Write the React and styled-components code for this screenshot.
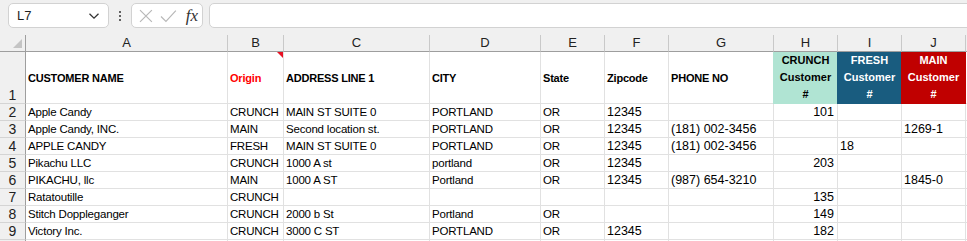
import React from "react";
import styled, { createGlobalStyle, css } from "styled-components";

const Global = createGlobalStyle`
  html, body { margin: 0; padding: 0; background: #ffffff; overflow: hidden; height: 241px; }
  body { font-family: "Liberation Sans", Arial, sans-serif; color: #000; }
`;

const Page = styled.div`
  width: 967px;
  height: 241px;
  display: flex;
  flex-direction: column;
  background: #f0f0f0;
  overflow: hidden;
`;

const Toolbar = styled.div`
  height: 35px;
  flex: 0 0 35px;
  display: flex;
  align-items: flex-start;
  padding: 3px 0 0 8px;
  box-sizing: border-box;
  background: #f0f0f0;
`;

const Box = styled.div`
  height: 25px;
  box-sizing: border-box;
  background: #ffffff;
  border: 1px solid #d2d2d2;
  border-radius: 5px;
  display: flex;
  align-items: center;
`;

const NameBox = styled(Box)`
  width: 101px;
  padding: 0 8px 0 8px;
  justify-content: space-between;
  font-size: 13px;
  color: #1f1f1f;
`;

const Dots = styled.div`
  width: 22px;
  height: 25px;
  display: flex;
  flex-direction: column;
  align-items: center;
  justify-content: center;
  gap: 2px;
  span {
    width: 2px;
    height: 2px;
    background: #333;
    border-radius: 1px;
  }
`;

const FxBox = styled(Box)`
  width: 72px;
  padding: 0 4px 0 7px;
  gap: 7px;
`;

const Fx = styled.span`
  font-family: "Liberation Serif", "DejaVu Serif", serif;
  font-style: italic;
  font-size: 17px;
  color: #333;
  margin-left: 2px;
`;

const Formula = styled(Box)`
  flex: 1;
  margin-left: 6px;
  margin-right: -8px;
`;

const Sheet = styled.div`
  display: grid;
  grid-template-columns: 26px 202px 56px 146px 111px 64px 64px 105px 64px 64px 64px 30px;
  grid-template-rows: 17px 52px repeat(9, 17px);
  background: #ffffff;
`;

const ColHead = styled.div`
  box-sizing: border-box;
  background: #f0f0f0;
  border-right: 1px solid #c9c9c9;
  border-bottom: 1px solid #9e9e9e;
  display: flex;
  align-items: center;
  justify-content: center;
  font-size: 13px;
  color: #222;
  line-height: 16px;
  position: relative;
  ${(p) =>
    p.$corner &&
    css`
      border-right-color: #9e9e9e;
    `}
`;

const CornerTri = styled.div`
  position: absolute;
  right: 3px;
  bottom: 3px;
  width: 0;
  height: 0;
  border-left: 9px solid transparent;
  border-bottom: 9px solid #c4c4c4;
`;

const RowHead = styled.div`
  box-sizing: border-box;
  background: #f0f0f0;
  border-right: 1px solid #9e9e9e;
  border-bottom: 1px solid #d4d4d4;
  display: flex;
  align-items: ${(p) => (p.$tall ? "flex-end" : "center")};
  justify-content: center;
  font-size: 14px;
  color: #222;
  line-height: 16px;
`;

const Cell = styled.div`
  box-sizing: border-box;
  border-right: 1px solid #e1e1e1;
  border-bottom: 1px solid #e1e1e1;
  display: flex;
  align-items: center;
  justify-content: ${(p) => (p.$right ? "flex-end" : "flex-start")};
  padding: 1px ${(p) => (p.$right ? "3px" : "2px")} 0 2px;
  font-size: ${(p) => (p.$num ? "12.5px" : "11.5px")};
  letter-spacing: ${(p) => (p.$num ? "0" : "-0.2px")};
  white-space: nowrap;
  overflow: visible;
  line-height: 15px;
  color: #000;
`;

const HeadCell = styled.div`
  box-sizing: border-box;
  border-right: 1px solid #e1e1e1;
  border-bottom: 1px solid #e1e1e1;
  display: flex;
  align-items: center;
  padding: 0 2px;
  font-size: 11px;
  font-weight: 700;
  letter-spacing: -0.2px;
  white-space: nowrap;
  color: ${(p) => p.$color || "#000"};
  position: relative;
`;

const FillHead = styled.div`
  box-sizing: border-box;
  background: ${(p) => p.$bg};
  border-right: 1px solid ${(p) => p.$bg};
  border-bottom: 1px solid ${(p) => p.$bg};
  box-shadow: -1px 0 0 ${(p) => p.$bg};
  color: ${(p) => p.$fg};
  display: flex;
  flex-direction: column;
  align-items: center;
  justify-content: center;
  font-size: 11px;
  font-weight: 700;
  line-height: 17px;
  text-align: center;
  white-space: nowrap;
  position: relative;
  z-index: 1;
`;

const Comment = styled.div`
  position: absolute;
  top: 0;
  right: 0;
  width: 0;
  height: 0;
  border-left: 6px solid transparent;
  border-top: 6px solid #e81123;
`;

const cols = ["A", "B", "C", "D", "E", "F", "G", "H", "I", "J"];

const rows = [
  [2, "Apple Candy", "CRUNCH", "MAIN ST SUITE 0", "PORTLAND", "OR", "12345", "", "101", "", ""],
  [3, "Apple Candy, INC.", "MAIN", "Second location st.", "PORTLAND", "OR", "12345", "(181) 002-3456", "", "", "1269-1"],
  [4, "APPLE CANDY", "FRESH", "MAIN ST SUITE 0", "PORTLAND", "OR", "12345", "(181) 002-3456", "", "18", ""],
  [5, "Pikachu LLC", "CRUNCH", "1000 A st", "portland", "OR", "12345", "", "203", "", ""],
  [6, "PIKACHU, llc", "MAIN", "1000 A ST", "Portland", "OR", "12345", "(987) 654-3210", "", "", "1845-0"],
  [7, "Ratatoutille", "CRUNCH", "", "", "", "", "", "135", "", ""],
  [8, "Stitch Doppleganger", "CRUNCH", "2000 b St", "Portland", "OR", "", "", "149", "", ""],
  [9, "Victory Inc.", "CRUNCH", "3000 C ST", "PORTLAND", "OR", "12345", "", "182", "", ""],
  ["", "", "", "", "", "", "", "", "", "", ""],
];

const numCols = new Set([6, 7, 8, 9, 10]);

const Chevron = () => (
  <svg width="12" height="8" viewBox="0 0 12 8">
    <path d="M1.5 1.8 L6 6.2 L10.5 1.8" fill="none" stroke="#333" strokeWidth="1.3" />
  </svg>
);

const XIcon = () => (
  <svg width="14" height="14" viewBox="0 0 14 14">
    <path d="M1 1 L13 13 M13 1 L1 13" stroke="#b8b8b8" strokeWidth="1.2" fill="none" />
  </svg>
);

const CheckIcon = () => (
  <svg width="17" height="14" viewBox="0 0 17 14">
    <path d="M1 7.5 L6 12.5 L16 1.5" stroke="#b8b8b8" strokeWidth="1.2" fill="none" />
  </svg>
);

export default function App() {
  return (
    <Page>
      <Global />
      <Toolbar>
        <NameBox>
          <span>L7</span>
          <Chevron />
        </NameBox>
        <Dots>
          <span />
          <span />
          <span />
        </Dots>
        <FxBox>
          <XIcon />
          <CheckIcon />
          <Fx>fx</Fx>
        </FxBox>
        <Formula />
      </Toolbar>
      <Sheet>
        <ColHead $corner>
          <CornerTri />
        </ColHead>
        {cols.map((c) => (
          <ColHead key={c}>{c}</ColHead>
        ))}
        <ColHead />

        <RowHead $tall>1</RowHead>
        <HeadCell>CUSTOMER NAME</HeadCell>
        <HeadCell $color="#ff0000">
          Origin
          <Comment />
        </HeadCell>
        <HeadCell>ADDRESS LINE 1</HeadCell>
        <HeadCell>CITY</HeadCell>
        <HeadCell>State</HeadCell>
        <HeadCell>Zipcode</HeadCell>
        <HeadCell>PHONE NO</HeadCell>
        <FillHead $bg="#b0e4d3" $fg="#000">
          <span>CRUNCH</span>
          <span>Customer</span>
          <span>#</span>
        </FillHead>
        <FillHead $bg="#195c7f" $fg="#ffffff">
          <span>FRESH</span>
          <span>Customer</span>
          <span>#</span>
        </FillHead>
        <FillHead $bg="#c00000" $fg="#ffffff">
          <span>MAIN</span>
          <span>Customer</span>
          <span>#</span>
        </FillHead>
        <Cell />

        {rows.map((r, ri) => (
          <React.Fragment key={ri}>
            <RowHead>{r[0]}</RowHead>
            {r.slice(1).map((v, i) => (
              <Cell key={i} $num={numCols.has(i + 1) && v !== ""} $right={i + 1 === 8}>
                {v}
              </Cell>
            ))}
            <Cell />
          </React.Fragment>
        ))}
      </Sheet>
    </Page>
  );
}
